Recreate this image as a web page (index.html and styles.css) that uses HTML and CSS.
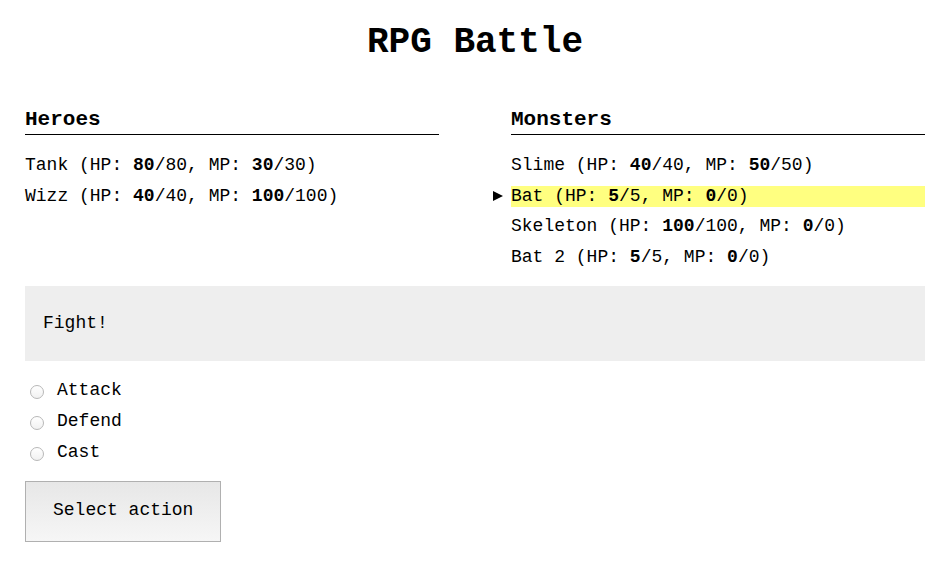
FILE: index.html
```html
<!DOCTYPE html>
<html lang="en">
<head>
<meta charset="utf-8">
<title>RPG Battle</title>
<link rel="stylesheet" href="styles.css">
</head>
<body>
<div class="app">
  <h1 class="title">RPG Battle</h1>
  <div class="teams">
    <section class="team">
      <h3 class="team-name">Heroes</h3>
      <ul class="roster">
        <li class="unit">Tank (HP: <b>80</b>/80, MP: <b>30</b>/30)</li>
        <li class="unit">Wizz (HP: <b>40</b>/40, MP: <b>100</b>/100)</li>
      </ul>
    </section>
    <section class="team">
      <h3 class="team-name">Monsters</h3>
      <ul class="roster">
        <li class="unit">Slime (HP: <b>40</b>/40, MP: <b>50</b>/50)</li>
        <li class="unit active">Bat (HP: <b>5</b>/5, MP: <b>0</b>/0)</li>
        <li class="unit">Skeleton (HP: <b>100</b>/100, MP: <b>0</b>/0)</li>
        <li class="unit">Bat 2 (HP: <b>5</b>/5, MP: <b>0</b>/0)</li>
      </ul>
    </section>
  </div>
  <div class="log">Fight!</div>
  <form class="actions">
    <ul class="choices">
      <li class="choice"><label><input type="radio" name="action" value="attack" class="radio">Attack</label></li>
      <li class="choice"><label><input type="radio" name="action" value="defend" class="radio">Defend</label></li>
      <li class="choice"><label><input type="radio" name="action" value="cast" class="radio">Cast</label></li>
    </ul>
    <button type="button" class="btn">Select action</button>
  </form>
</div>
</body>
</html>
```
FILE: styles.css
```css
html, body {
  margin: 0;
  padding: 0;
  background: #fff;
}
body {
  padding: 0 25px;
  font-family: "Liberation Mono", "Courier New", monospace;
  font-size: 18px;
  line-height: 21.6px;
  color: #000;
}
.app {
  max-width: 900px;
  padding-top: 25px;
}
.title {
  margin: 0;
  font-size: 36px;
  line-height: 36px;
  text-align: center;
  font-weight: bold;
}
.teams {
  display: flex;
  justify-content: space-between;
  margin-top: 47px;
}
.team {
  width: 414px;
}
.team-name {
  margin: 0;
  font-size: 21px;
  line-height: 24px;
  font-weight: bold;
  padding-bottom: 2px;
  border-bottom: 1px solid #000;
}
.roster {
  list-style: none;
  margin: 20px 0 0;
  padding: 0;
}
.unit {
  position: relative;
  margin-bottom: 9px;
  white-space: pre;
}
.unit b {
  font-weight: bold;
}
.unit.active {
  background: #ffff80;
}
.unit.active::before {
  content: "";
  position: absolute;
  left: -18px;
  top: 5px;
  border-left: 10px solid #000;
  border-top: 5px solid transparent;
  border-bottom: 5px solid transparent;
}
.log {
  margin-top: 9px;
  background: #eeeeee;
  padding: 27px 18px 26px;
}
.actions {
  margin: 19px 0 0;
}
.choices {
  list-style: none;
  margin: 0;
  padding: 0;
}
.choice {
  margin-bottom: 9.4px;
}
.choice label {
  display: flex;
  align-items: center;
}
.radio {
  appearance: none;
  -webkit-appearance: none;
  width: 14px;
  height: 14px;
  margin: 2px 13px 0 5px;
  border: 1px solid #b8b8b8;
  border-radius: 50%;
  background: linear-gradient(#ffffff, #f1f1f1);
  box-sizing: border-box;
  flex: none;
}
.btn {
  margin-top: 8.3px;
  font-family: inherit;
  font-size: 18px;
  line-height: 21.6px;
  color: #000;
  padding: 18px 27px 19px;
  border: 1px solid #b0b0b0;
  border-radius: 0;
  background: linear-gradient(#e7e7e7, #f6f6f6);
}
```
